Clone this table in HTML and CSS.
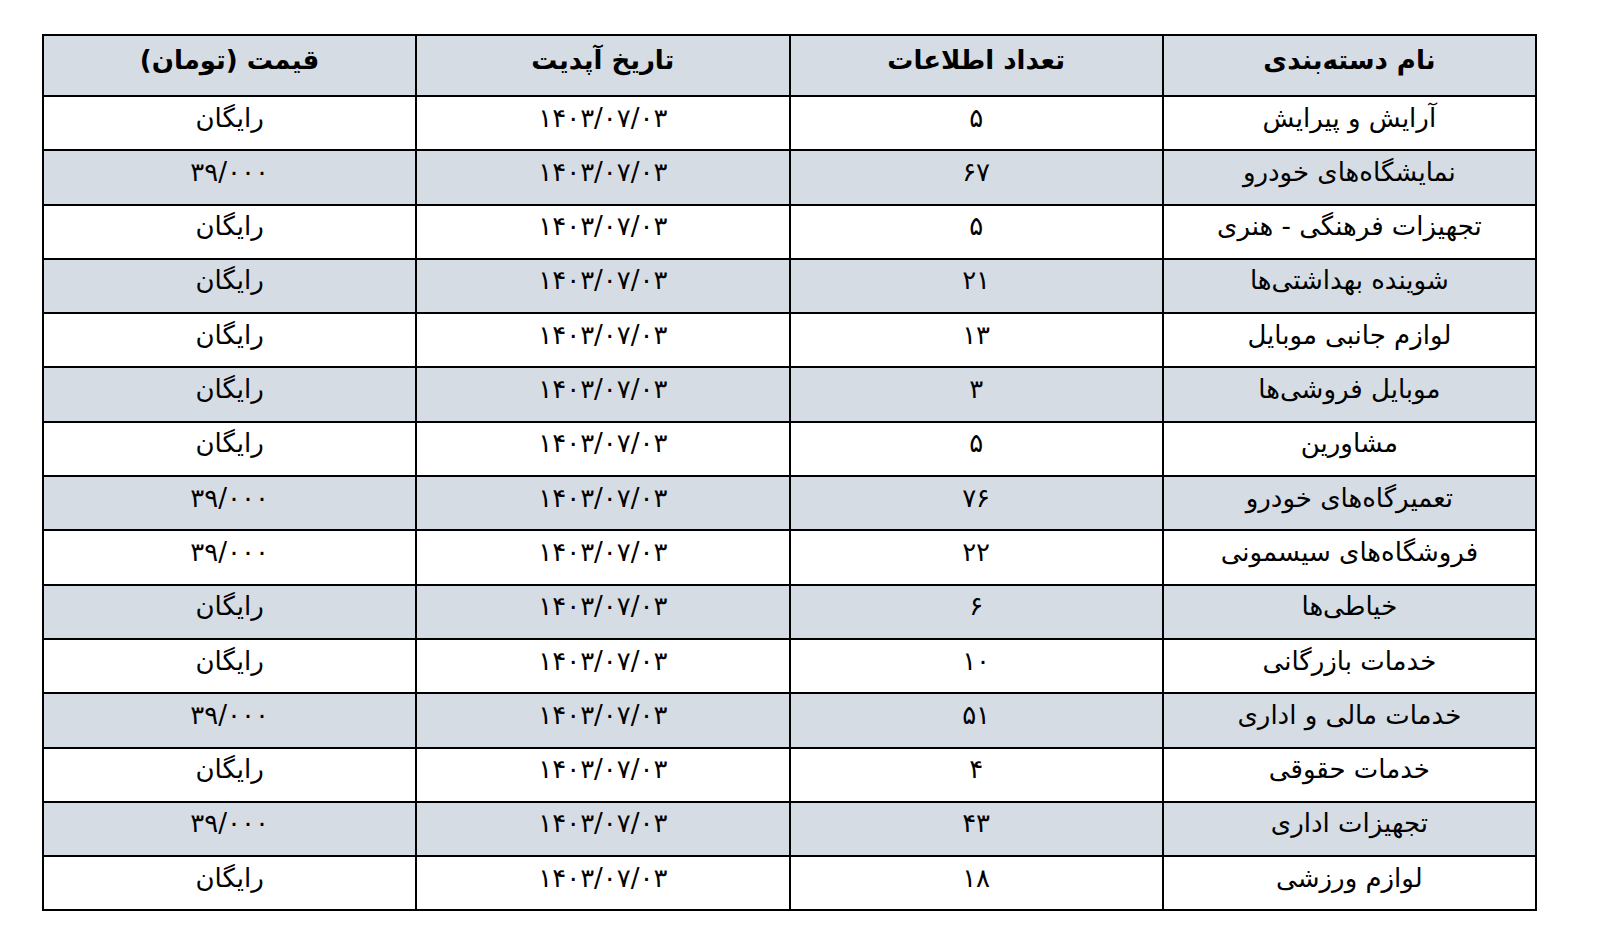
FILE: index.html
```html
<!DOCTYPE html>
<html lang="fa" dir="rtl">
<head>
<meta charset="utf-8">
<title>جدول دسته‌بندی‌ها</title>
<link rel="stylesheet" href="styles.css">
</head>
<body>
<table class="price-table">
  <thead>
    <tr>
      <th>نام دسته&zwnj;بندی</th>
      <th>تعداد اطلاعات</th>
      <th>تاریخ آپدیت</th>
      <th>قیمت (تومان)</th>
    </tr>
  </thead>
  <tbody>
    <tr><td>آرایش و پیرایش</td><td>۵</td><td>۱۴۰۳/۰۷/۰۳</td><td>رایگان</td></tr>
    <tr class="alt"><td>نمایشگاه&zwnj;های خودرو</td><td>۶۷</td><td>۱۴۰۳/۰۷/۰۳</td><td>۳۹/۰۰۰</td></tr>
    <tr><td>تجهیزات فرهنگی - هنری</td><td>۵</td><td>۱۴۰۳/۰۷/۰۳</td><td>رایگان</td></tr>
    <tr class="alt"><td>شوینده بهداشتی&zwnj;ها</td><td>۲۱</td><td>۱۴۰۳/۰۷/۰۳</td><td>رایگان</td></tr>
    <tr><td>لوازم جانبی موبایل</td><td>۱۳</td><td>۱۴۰۳/۰۷/۰۳</td><td>رایگان</td></tr>
    <tr class="alt"><td>موبایل فروشی&zwnj;ها</td><td>۳</td><td>۱۴۰۳/۰۷/۰۳</td><td>رایگان</td></tr>
    <tr><td>مشاورین</td><td>۵</td><td>۱۴۰۳/۰۷/۰۳</td><td>رایگان</td></tr>
    <tr class="alt"><td>تعمیرگاه&zwnj;های خودرو</td><td>۷۶</td><td>۱۴۰۳/۰۷/۰۳</td><td>۳۹/۰۰۰</td></tr>
    <tr><td>فروشگاه&zwnj;های سیسمونی</td><td>۲۲</td><td>۱۴۰۳/۰۷/۰۳</td><td>۳۹/۰۰۰</td></tr>
    <tr class="alt"><td>خیاطی&zwnj;ها</td><td>۶</td><td>۱۴۰۳/۰۷/۰۳</td><td>رایگان</td></tr>
    <tr><td>خدمات بازرگانی</td><td>۱۰</td><td>۱۴۰۳/۰۷/۰۳</td><td>رایگان</td></tr>
    <tr class="alt"><td>خدمات مالی و اداری</td><td>۵۱</td><td>۱۴۰۳/۰۷/۰۳</td><td>۳۹/۰۰۰</td></tr>
    <tr><td>خدمات حقوقی</td><td>۴</td><td>۱۴۰۳/۰۷/۰۳</td><td>رایگان</td></tr>
    <tr class="alt"><td>تجهیزات اداری</td><td>۴۳</td><td>۱۴۰۳/۰۷/۰۳</td><td>۳۹/۰۰۰</td></tr>
    <tr><td>لوازم ورزشی</td><td>۱۸</td><td>۱۴۰۳/۰۷/۰۳</td><td>رایگان</td></tr>
  </tbody>
</table>
</body>
</html>
```
FILE: styles.css
```css
html, body {
  margin: 0;
  background: #ffffff;
}
body {
  padding: 34px 69px 0 42px;
  font-family: "DejaVu Sans", "Noto Sans", sans-serif;
  color: #000000;
}
.price-table {
  width: 1495px;
  border-collapse: collapse;
  table-layout: fixed;
  border: 2px solid #000;
}
.price-table th,
.price-table td {
  width: 25%;
  border: 2px solid #000;
  text-align: center;
  padding: 0 0 10px;
  box-sizing: border-box;
  line-height: 1.2;
}
.price-table th {
  height: 61px;
  background: #d6dce4;
  font-size: 26px;
  font-weight: bold;
}
.price-table td {
  height: 54.3px;
  font-size: 26px;
  font-weight: normal;
}
.price-table tr.alt td {
  background: #d6dce4;
}
```
